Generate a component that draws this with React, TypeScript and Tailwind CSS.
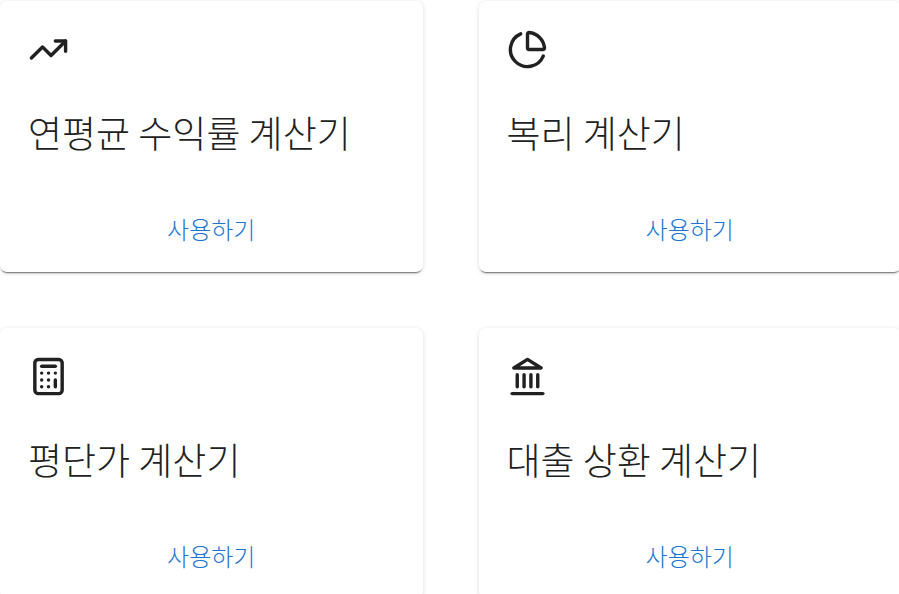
import type { ReactNode } from "react";
import { Calculator, ChartPie, TrendingUp } from "lucide-react";

function BankIcon({ className }: { className?: string }) {
  return (
    <svg
      viewBox="0 0 24 24"
      fill="none"
      stroke="currentColor"
      strokeWidth="2"
      strokeLinecap="round"
      strokeLinejoin="round"
      className={className}
      aria-hidden="true"
    >
      <path d="M3 22h18" />
      <path d="M6 18v-7" />
      <path d="M10 18v-7" />
      <path d="M14 18v-7" />
      <path d="M18 18v-7" />
      <path d="M12 2l8 5H4z" />
    </svg>
  );
}

interface CardItem {
  id: string;
  title: string;
  icon: ReactNode;
}

const calculators: CardItem[] = [
  { id: "cagr", title: "연평균 수익률 계산기", icon: <TrendingUp className="size-[41px]" /> },
  { id: "compound", title: "복리 계산기", icon: <ChartPie className="size-[41px]" /> },
  { id: "average", title: "평단가 계산기", icon: <Calculator className="size-[41px]" /> },
  { id: "loan", title: "대출 상환 계산기", icon: <BankIcon className="size-[41px]" /> },
];

function CalculatorCard({ id, title, icon }: CardItem) {
  return (
    <article className="flex flex-col rounded-[7px] bg-white shadow-[0_3px_2px_-2px_rgba(0,0,0,0.3),0_2px_1px_-1px_rgba(0,0,0,0.3),0_1px_5px_0_rgba(0,0,0,0.14)]">
      <div className="flex flex-col gap-9 p-7">
        {icon}
        <h2 id={id} className="text-[37px] leading-[53px] font-light">
          {title}
        </h2>
      </div>
      {/* Card action */}
      <div className="flex px-3.5 pt-3.5 pb-4">
        <a
          href={`#${id}`}
          aria-describedby={id}
          className="flex-1 rounded-[7px] py-1.5 text-center text-2xl leading-[43px] font-light text-[#1976d2]"
        >
          사용하기
        </a>
      </div>
    </article>
  );
}

export default function App() {
  return (
    <main className="min-h-screen overflow-hidden bg-white pt-px font-['Noto_Sans_CJK_KR',sans-serif] text-[#212121]">
      <div className="-mr-0.5 grid grid-cols-2 gap-14">
        {calculators.map((item) => (
          <CalculatorCard key={item.id} {...item} />
        ))}
      </div>
    </main>
  );
}
